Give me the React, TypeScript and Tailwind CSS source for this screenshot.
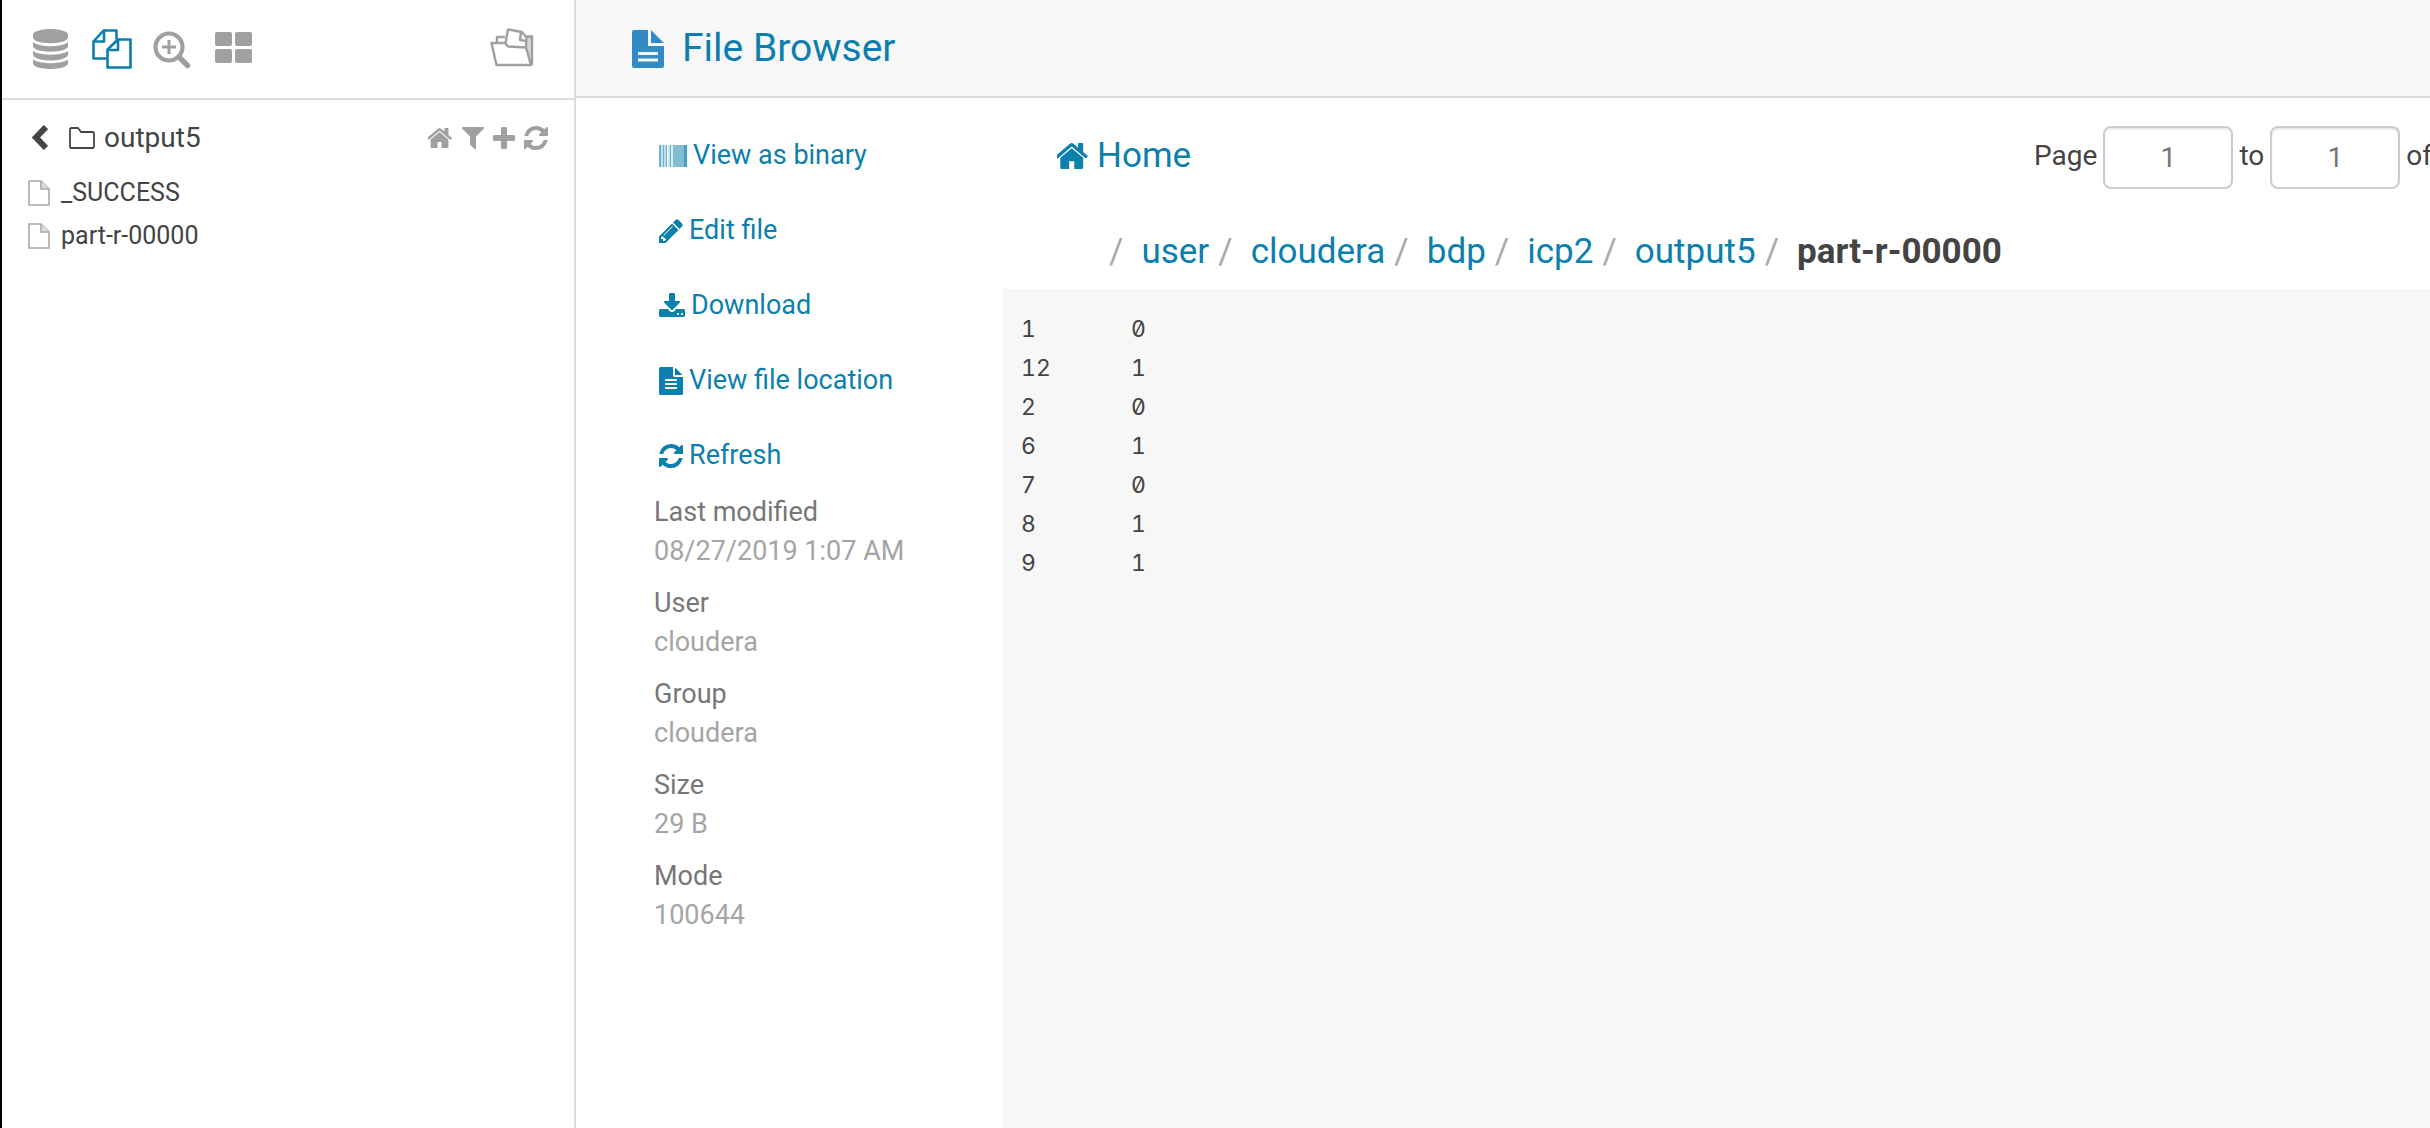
import React from "react";

const paths = {
  home: "M1408 992v480q0 26-19 45t-45 19h-384v-384h-256v384h-384q-26 0-45-19t-19-45v-480q0-1 .5-3t.5-3l575-474 575 474q1 2 1 6zm223-69l-62 74q-8 9-21 11h-3q-13 0-21-7l-692-577-692 577q-12 8-24 7-13-2-21-11l-62-74q-8-10-7-23.5t11-21.5l719-599q32-26 76-26t76 26l244 204v-195q0-14 9-23t23-9h192q14 0 23 9t9 23v408l219 182q10 8 11 21.5t-7 23.5z",
  refresh: "M1639 1056q0 5-1 7-64 268-268 434.5t-478 166.5q-146 0-282.5-55t-243.5-157l-129 129q-19 19-45 19t-45-19-19-45v-448q0-26 19-45t45-19h448q26 0 45 19t19 45-19 45l-137 137q71 66 161 102t187 36q134 0 250-65t186-179q11-17 53-117 8-23 30-23h192q13 0 22.5 9.5t9.5 22.5zm25-800v448q0 26-19 45t-45 19h-448q-26 0-45-19t-19-45 19-45l138-138q-148-137-349-137-134 0-250 65t-186 179q-11 17-53 117-8 23-30 23h-199q-13 0-22.5-9.5t-9.5-22.5v-7q65-268 270-434.5t480-166.5q146 0 284 55.5t245 156.5l130-129q19-19 45-19t45 19 19 45z",
  filter: "M1595 295q17 41-14 70l-493 493v742q0 42-39 59-13 5-25 5-27 0-45-19l-256-256q-19-19-19-45v-486l-493-493q-31-29-14-70 17-39 59-39h1280q42 0 59 39z",
  plus: "M1600 736v192q0 40-28 68t-68 28h-416v416q0 40-28 68t-68 28h-192q-40 0-68-28t-28-68v-416h-416q-40 0-68-28t-28-68v-192q0-40 28-68t68-28h416v-416q0-40 28-68t68-28h192q40 0 68 28t28 68v416h416q40 0 68 28t28 68z",
  pencil: "M491 1536l91-91-235-235-91 91v107h128v128h107zm523-928q0-22-22-22-10 0-17 7l-542 542q-7 7-7 17 0 22 22 22 10 0 17-7l542-542q7-7 7-17zm-54-192l416 416-832 832h-416v-416zm683 96q0 53-37 90l-166 166-416-416 166-165q36-38 90-38 53 0 91 38l235 234q37 39 37 91z",
  download: "M1344 1344q0-26-19-45t-45-19-45 19-19 45 19 45 45 19 45-19 19-45zm256 0q0-26-19-45t-45-19-45 19-19 45 19 45 45 19 45-19 19-45zm128-224v320q0 40-28 68t-68 28h-1472q-40 0-68-28t-28-68v-320q0-40 28-68t68-28h465l135 136q58 56 136 56t136-56l136-136h464q40 0 68 28t28 68zm-325-569q17 41-14 70l-448 448q-18 19-45 19t-45-19l-448-448q-31-29-14-70 17-39 59-39h256v-448q0-26 19-45t45-19h256q26 0 45 19t19 45v448h256q42 0 59 39z",
  fileText: "M1596 476q14 14 28 36h-472v-472q22 14 36 28zm-476 164h544v1056q0 40-28 68t-68 28h-1344q-40 0-68-28t-28-68v-1600q0-40 28-68t68-28h800v544q0 40 28 68t68 28zm160 736v-64q0-14-9-23t-23-9h-704q-14 0-23 9t-9 23v64q0 14 9 23t23 9h704q14 0 23-9t9-23zm0-256v-64q0-14-9-23t-23-9h-704q-14 0-23 9t-9 23v64q0 14 9 23t23 9h704q14 0 23-9t9-23zm0-256v-64q0-14-9-23t-23-9h-704q-14 0-23 9t-9 23v64q0 14 9 23t23 9h704q14 0 23-9t9-23z",
  database: "M896 768q237 0 443-43t325-127v170q0 69-103 128t-280 93.5-385 34.5-385-34.5-280-93.5-103-128v-170q119 84 325 127t443 43zm0 768q237 0 443-43t325-127v170q0 69-103 128t-280 93.5-385 34.5-385-34.5-280-93.5-103-128v-170q119 84 325 127t443 43zm0-384q237 0 443-43t325-127v170q0 69-103 128t-280 93.5-385 34.5-385-34.5-280-93.5-103-128v-170q119 84 325 127t443 43zm0-1152q208 0 385 34.5t280 93.5 103 128v128q0 69-103 128t-280 93.5-385 34.5-385-34.5-280-93.5-103-128v-128q0-69 103-128t280-93.5 385-34.5z",
};

function Glyph({ d, box, className }: { d: string; box: string; className: string }) {
  return (
    <svg viewBox={box} preserveAspectRatio="none" fill="currentColor" aria-hidden="true" className={"shrink-0 " + className}>
      <path d={d} />
    </svg>
  );
}

function FilesIcon() {
  return (
    <svg viewBox="0 0 40 40" fill="none" stroke="currentColor" strokeWidth="2.6" strokeLinejoin="round" aria-hidden="true" className="h-10 w-10">
      <path d="M14.500 29.500H1.500V12.500L11.500 1.500H24.500V10.500" />
      <path d="M2 12.500H12V2" />
      <path d="M15.500 38.500V20.500L26 10.500H38.500V38.500Z" />
      <path d="M16 21H26V11" />
    </svg>
  );
}

function ZoomIcon() {
  return (
    <svg viewBox="0 0 38 38" fill="none" stroke="currentColor" aria-hidden="true" className="h-[38px] w-[38px]">
      <circle cx="16" cy="16" r="13.500" strokeWidth="4.200" />
      <path d="M26 26L34.500 34.500" strokeWidth="5.500" strokeLinecap="round" />
      <path d="M16 9V23M9 16H23" strokeWidth="3" />
    </svg>
  );
}

function GridIcon() {
  return (
    <svg viewBox="0 0 37 31" fill="currentColor" aria-hidden="true" className="h-[31px] w-[37px]">
      <rect width="17" height="14" rx="2" />
      <rect x="20" width="17" height="14" rx="2" />
      <rect y="17" width="17" height="14" rx="2" />
      <rect x="20" y="17" width="17" height="14" rx="2" />
    </svg>
  );
}

function OpenFolderIcon() {
  return (
    <svg viewBox="0 0 44 39" fill="none" stroke="currentColor" strokeWidth="2.400" strokeLinejoin="round" aria-hidden="true" className="h-[39px] w-11">
      <path d="M36 9H42V37H40L36 19Z" fill="#d6d6d6" stroke="none" />
      <path d="M1.500 15H15L18 18.500L36 19.500L41 37H6.500Z" />
      <path d="M7 14V9H15" />
      <path d="M15.500 15L18 1.500L32 4L36.500 9.500L36 19" />
      <path d="M31 4L30 12L36 13" />
      <path d="M36 8.500H42V37" />
    </svg>
  );
}

function BarcodeIcon() {
  return (
    <svg viewBox="0 0 28 22" fill="currentColor" aria-hidden="true" className="h-[22px] w-7 shrink-0">
      <path d="M0 0H28V22H0z" opacity="0.25" />
      <path d="M0 0H2V22H0zM4 0H5V22H4zM7 0H8V22H7zM11 0H12V22H11z" opacity="0.45" />
      <path d="M14 0H28V22H14z" opacity="0.35" />
      <path d="M25 0H28V22H25z" opacity="0.5" />
      <path d="M8 0H9.500V22H8zM12.500 0H13.500V22H12.500z" fill="#ffffff" opacity="0.9" />
    </svg>
  );
}

function FileIcon() {
  return (
    <svg viewBox="0 0 22 26" fill="none" stroke="#aaaaaa" strokeWidth="1.600" aria-hidden="true" className="h-[26px] w-[22px]">
      <path d="M1 1H13L21 9V25H1Z" />
      <path d="M13 1V9H21" fill="#dddddd" />
    </svg>
  );
}

const actions = [
  { label: "View as binary", icon: <BarcodeIcon /> },
  { label: "Edit file", icon: <Glyph d={paths.pencil} box="128 128 1536 1536" className="h-6 w-6" /> },
  { label: "Download", icon: <Glyph d={paths.download} box="64 0 1664 1536" className="mb-0.5 h-6 w-[26px]" /> },
  { label: "View file location", icon: <Glyph d={paths.fileText} box="128 0 1536 1792" className="h-7 w-6" /> },
  { label: "Refresh", icon: <Glyph d={paths.refresh} box="128 128 1536 1536" className="h-6 w-6" /> },
];

const details = [
  ["Last modified", "08/27/2019 1:07 AM"],
  ["User", "cloudera"],
  ["Group", "cloudera"],
  ["Size", "29 B"],
  ["Mode", "100644"],
];

const crumbs = ["user", "cloudera", "bdp", "icp2", "output5"];

const content = "1\t0\n12\t1\n2\t0\n6\t1\n7\t0\n8\t1\n9\t1";

function Sidebar() {
  return (
    <aside className="w-[574px] shrink-0 border-r-2 border-[#dddddd]">
      <nav aria-label="Assist" className="flex h-[100px] items-center border-b-2 border-[#dddddd] pl-[31px] pr-10 text-[#a0a0a0]">
        <button aria-label="Databases"><Glyph d={paths.database} box="128 0 1536 1792" className="h-10 w-[35px]" /></button>
        <button aria-label="Files" className="ml-6 text-[#0b7fad]"><FilesIcon /></button>
        <button aria-label="Search" className="ml-[21px] mt-0.5"><ZoomIcon /></button>
        <button aria-label="Apps" className="mb-1 ml-6"><GridIcon /></button>
        <button aria-label="Open documents" className="mb-1 ml-auto"><OpenFolderIcon /></button>
      </nav>
      <div className="flex h-[71px] items-center pl-[30px] pr-[26px] pt-1">
        <button aria-label="Back" className="text-[#444444]">
          <svg viewBox="0 0 16 25" fill="none" stroke="currentColor" strokeWidth="6" aria-hidden="true" className="h-[25px] w-4"><path d="M14 2L4 12.500L14 23" /></svg>
        </button>
        <a href="#output5" className="ml-[21px] flex items-center gap-[9px] text-[28px] leading-10">
          <svg viewBox="0 0 26 22" fill="none" stroke="currentColor" strokeWidth="1.800" strokeLinejoin="round" aria-hidden="true" className="h-[22px] w-[26px]"><path d="M1 2.500Q1 1 2.500 1H9L12 5H23.500Q25 5 25 6.500V19.500Q25 21 23.500 21H2.500Q1 21 1 19.500Z" /></svg>
          output5
        </a>
        <div className="ml-auto flex items-center gap-[9px] text-[#a0a0a0]">
          <button aria-label="Home"><Glyph d={paths.home} box="89 253 1614 1283" className="h-5 w-[25px]" /></button>
          <button aria-label="Filter"><Glyph d={paths.filter} box="192 256 1408 1408" className="h-[22px] w-[22px]" /></button>
          <button aria-label="Add"><Glyph d={paths.plus} box="192 128 1408 1408" className="h-[22px] w-[22px]" /></button>
          <button aria-label="Refresh"><Glyph d={paths.refresh} box="128 128 1536 1536" className="h-6 w-6" /></button>
        </div>
      </div>
      <ul className="pl-[26px] text-[#444444]">
        {["_SUCCESS", "part-r-00000"].map((name) => (
          <li key={name}>
            <a href={"#" + name} className="flex h-[43px] items-center gap-[11px] text-[25px]"><FileIcon />{name}</a>
          </li>
        ))}
      </ul>
    </aside>
  );
}

export default function App() {
  return (
    <div className="flex min-h-screen overflow-hidden border-l-2 border-black bg-white font-['Roboto',sans-serif] text-[#444444]">
      <Sidebar />
      <div className="flex min-w-0 grow flex-col">
        <header className="flex h-[98px] items-center gap-[18px] border-b-2 border-[#dddddd] bg-[#f7f7f7] pl-14 text-[#0b7fad]">
          <svg viewBox="0 0 32 38" aria-hidden="true" className="mt-0.5 h-[38px] w-8">
            <path d="M2 0H16V16H32V36Q32 38 30 38H2Q0 38 0 36V2Q0 0 2 0ZM19 0L32 13H19Z" fill="#338bc6" />
            <path d="M6 23.500H26M6 30H26" stroke="#f7f7f7" strokeWidth="3" />
          </svg>
          <h1 className="text-[39px] leading-[56px]">File Browser</h1>
        </header>
        <div className="flex grow">
          <section aria-label="File actions" className="w-[427px] shrink-0 pl-[78px] pt-5 text-[27px]">
            <ul className="pl-[5px]">
              {actions.map((a) => (
                <li key={a.label}>
                  <a href="#action" className="flex h-[75px] items-center gap-1.5 text-[#0b7fad]">{a.icon}{a.label}</a>
                </li>
              ))}
            </ul>
            <dl>
              {details.map(([term, value]) => (
                <div key={term} className="mb-[13px] leading-[39px]">
                  <dt className="text-[#777777]">{term}</dt>
                  <dd className="text-[#a5a5a5]">{value}</dd>
                </div>
              ))}
            </dl>
          </section>
          <main className="flex min-w-0 grow flex-col">
            <div className="flex items-center pl-[54px] pt-7">
              <a href="#home" className="flex items-center gap-2 pb-1 text-[35px] leading-[59px] text-[#0b7fad]">
                <Glyph d={paths.home} box="89 253 1614 1283" className="h-[26px] w-8" />Home
              </a>
              <form className="-mr-0.5 ml-auto flex items-center gap-1.5 text-[28px]">
                <label htmlFor="from" className="pb-1">Page</label>
                <input id="from" defaultValue="1" className="h-[63px] w-[130px] rounded-lg border-2 border-[#cccccc] text-center text-[#777777] shadow-[inset_0_2px_2px_rgba(0,0,0,0.075)]" />
                <label htmlFor="until" className="pb-1">to</label>
                <input id="until" defaultValue="1" className="h-[63px] w-[130px] rounded-lg border-2 border-[#cccccc] text-center text-[#777777] shadow-[inset_0_2px_2px_rgba(0,0,0,0.075)]" />
                <span className="pb-1">of</span>
              </form>
            </div>
            <nav aria-label="Path" className="flex h-[100px] items-center pl-[106px] pt-[26px] text-[35px]">
              {crumbs.map((c) => (
                <React.Fragment key={c}>
                  <span className="text-[#aaaaaa]">/</span>
                  <a href={"#" + c} className="ml-[18px] mr-[9px] text-[#0b7fad]">{c}</a>
                </React.Fragment>
              ))}
              <span className="text-[#aaaaaa]">/</span>
              <strong className="ml-[18px] font-bold">part-r-00000</strong>
            </nav>
            <pre className="grow bg-[#f7f7f7] pl-[18px] pt-[21px] font-['Inter',monospace] text-[23px] leading-[39px] slashed-zero tabular-nums [tab-size:110px]">{content}</pre>
          </main>
        </div>
      </div>
    </div>
  );
}
